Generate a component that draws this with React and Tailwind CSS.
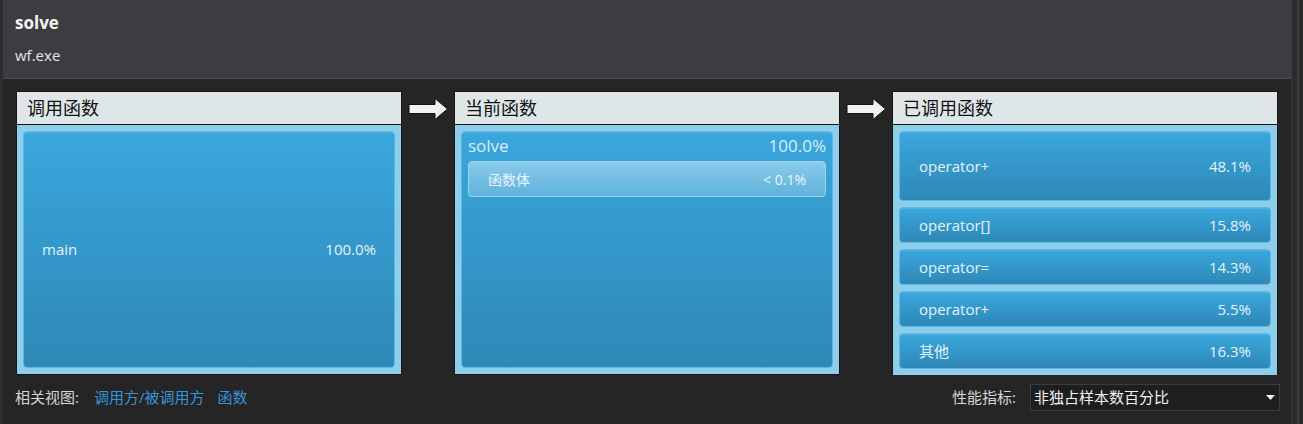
// Function details view: caller / current / callee breakdown.

const CJK = { fontFamily: '"Segoe UI", "Open Sans", "Noto Sans CJK SC", sans-serif' };

const callees = [
  { name: "operator+", pct: "48.1%", grow: true },
  { name: "operator[]", pct: "15.8%" },
  { name: "operator=", pct: "14.3%" },
  { name: "operator+", pct: "5.5%" },
  { name: "其他", pct: "16.3%" },
];

function Arrow() {
  return (
    <div className="flex w-[52px] shrink-0 justify-center pt-[6px]">
      <svg width="41" height="24" viewBox="0 0 41 24">
        <path d="M1 7.5 H27 V1.5 L39.5 12 L27 22.5 V16.5 H1 Z" fill="#eef2f3" stroke="#111" strokeWidth="1" />
      </svg>
    </div>
  );
}

function Panel({ title, children }) {
  return (
    <div className="flex h-[284px] w-[386px] shrink-0 flex-col border border-[#151515]">
      <div className="h-[33px] shrink-0 border-b border-[#151515] bg-[#dfe6e8] pl-[10px] text-[18px] leading-[32px] text-[#111]">{title}</div>
      <div className="flex flex-1 flex-col gap-[6px] bg-[#8dcfea] p-[6px]">{children}</div>
    </div>
  );
}

function BlueBox({ className = "", children }) {
  return (
    <div className={`rounded-[4px] border border-[#5cb7e2] bg-gradient-to-b from-[#3aa7dd] to-[#2e88b6] shadow-[inset_0_1px_0_rgba(255,255,255,0.15)] ${className}`}>
      {children}
    </div>
  );
}

export default function App() {
  return (
    <div className="flex h-[424px] w-[1303px] bg-[#252526] text-white" style={CJK}>
      <div className="flex w-[1291px] flex-col border-l-[3px] border-[#2e2e31]">
        <div className="h-[79px] shrink-0 border-b border-[#4a4a4f] bg-[#3d3c41] pl-[12px]">
          <div className="pt-[11px] text-[17px] font-bold leading-[24px] text-[#f4f4f4]">solve</div>
          <div className="pt-[10px] text-[15px] leading-[20px] text-[#e6e6e6]">wf.exe</div>
        </div>
        <div className="flex pl-[13px] pt-[12px]">
          <Panel title="调用函数">
            <BlueBox className="flex flex-1 items-center justify-between px-[18px] text-[15px] text-[#e4f3fa]">
              <span>main</span>
              <span>100.0%</span>
            </BlueBox>
          </Panel>
          <Arrow />
          <Panel title="当前函数">
            <BlueBox className="flex flex-1 flex-col px-[6px]">
              <div className="flex justify-between pt-[1px] text-[17px] leading-[26px] text-[#d9eef8]">
                <span>solve</span>
                <span>100.0%</span>
              </div>
              <div className="mt-[2px] flex h-[36px] items-center justify-between rounded-[4px] border border-[#9ad6f1] bg-gradient-to-b from-[#8acbea] to-[#5fb2dc] px-[19px] text-[14px] text-[#e8f4fa]">
                <span>函数体</span>
                <span>&lt; 0.1%</span>
              </div>
            </BlueBox>
          </Panel>
          <Arrow />
          <Panel title="已调用函数">
            {callees.map((c, i) => (
              <BlueBox
                key={i}
                className={`flex items-center justify-between px-[19px] text-[15px] text-[#e4f3fa] ${c.grow ? "h-[70px]" : "h-[36px]"}`}
              >
                <span>{c.name}</span>
                <span>{c.pct}</span>
              </BlueBox>
            ))}
          </Panel>
        </div>
        <div className="flex items-center pl-[12px] pt-[9px] text-[15px]">
          <span className="text-[#d6d6d6]">相关视图:</span>
          <span className="ml-[15px] text-[#3794da]">调用方/被调用方</span>
          <span className="ml-[13px] text-[#3794da]">函数</span>
          <span className="ml-auto text-[#d6d6d6]">性能指标:</span>
          <div className="ml-[14px] mr-[11px] flex h-[27px] w-[250px] items-center justify-between border border-[#3c3c3e] bg-[#1e1e1f] pl-[3px] pr-[4px] text-[#f0f0f0]">
            <span>非独占样本数百分比</span>
            <svg width="9" height="5" viewBox="0 0 9 5"><path d="M0 0 H9 L4.5 5 Z" fill="#eee" /></svg>
          </div>
        </div>
      </div>
      <div className="flex w-[12px] justify-center border-l border-[#3a3a3d] bg-[#2b2b2e]">
        <div className="w-[2px] bg-[#3d3d41]" />
      </div>
    </div>
  );
}
